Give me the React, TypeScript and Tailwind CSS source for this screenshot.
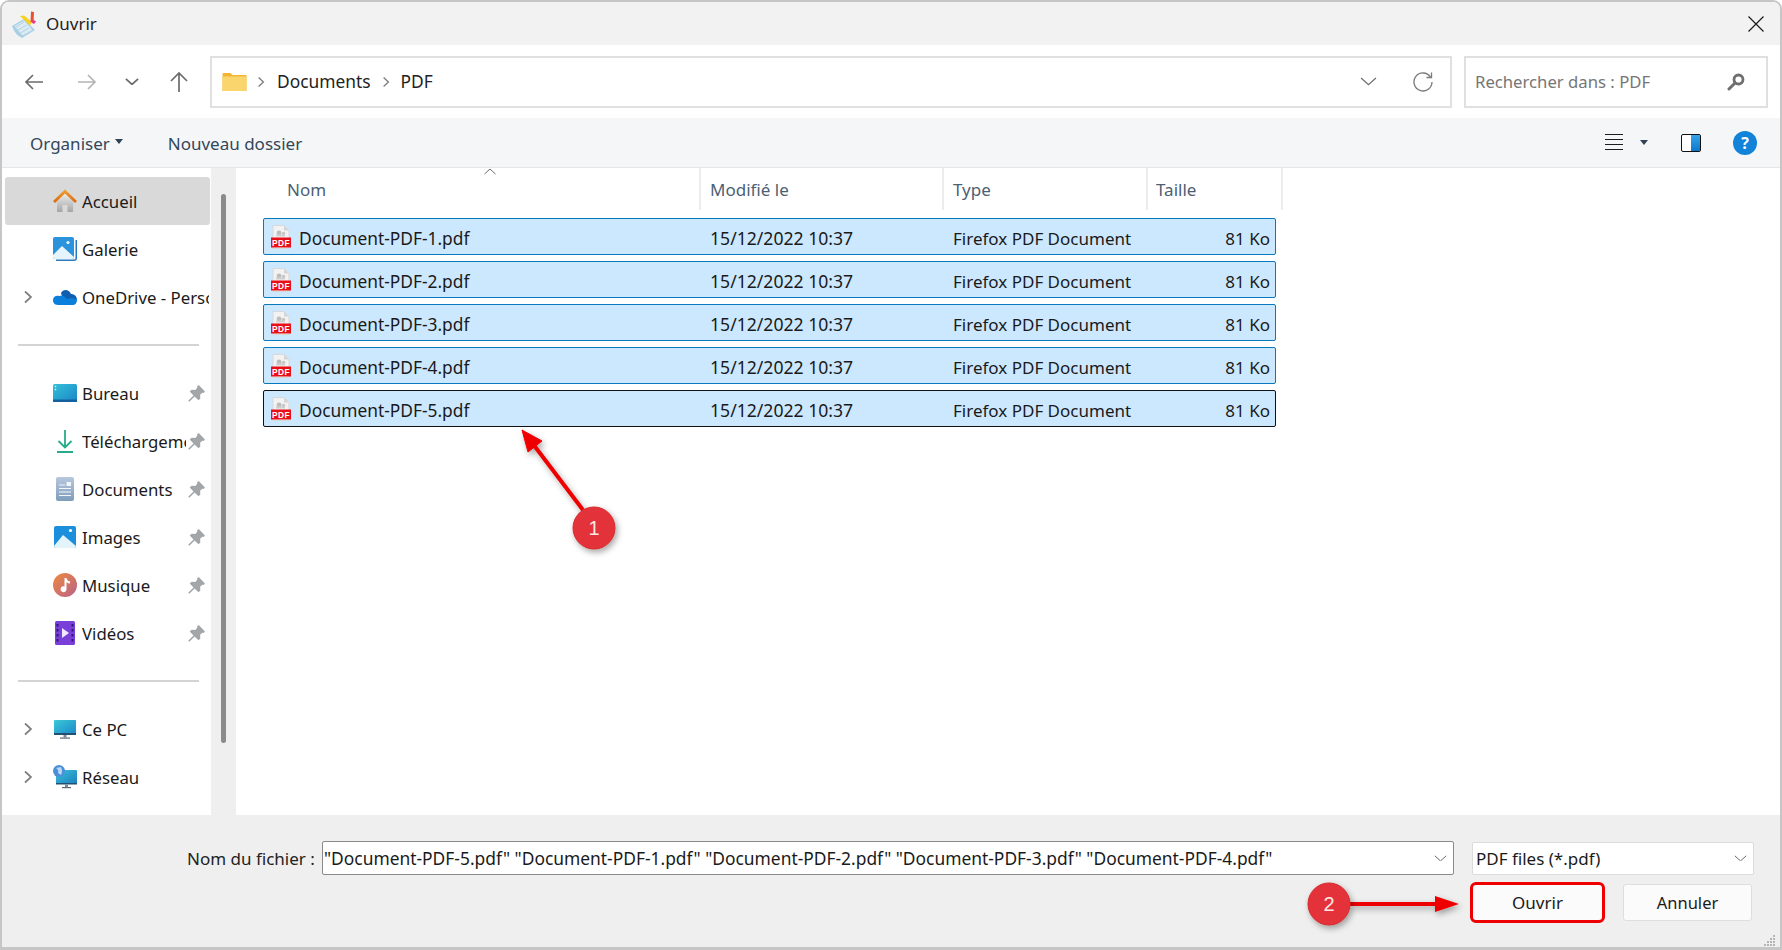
import React from "react";

const Chevron = ({ className = "" }: { className?: string }) => (
  <svg width="10" height="14" viewBox="0 0 10 14" className={className} fill="none" stroke="#7f7f7f" strokeWidth="1.7">
    <path d="M2 1.5 L8 7 L2 12.5" />
  </svg>
);

const Down = ({ w = 16, color = "#6b6b6b", sw = 1.2 }: { w?: number; color?: string; sw?: number }) => (
  <svg width={w} height={w / 2} viewBox="0 0 16 8" fill="none" stroke={color} strokeWidth={sw}>
    <path d="M1 1 L8 7.3 L15 1" />
  </svg>
);

const Caret = ({ color = "#2f4256" }: { color?: string }) => (
  <svg width="8" height="5" viewBox="0 0 8 5"><path d="M0 0H8L4 5Z" fill={color} /></svg>
);

const Pin = () => (
  <svg width="17" height="17" viewBox="0 0 16 16" fill="#a3a6a9">
    <path d="M10 0 L16 6 L14.6 7.6 L13.4 7.2 L11.4 9.2 L11.6 12.6 L9.8 14.4 L6.2 10.8 L1.2 15.8 L0.2 14.8 L5.2 9.8 L1.6 6.2 L3.4 4.4 L6.8 4.6 L8.8 2.6 L8.4 1.4 Z" />
  </svg>
);

const Home = () => (
  <svg width="24" height="24" viewBox="0 0 24 24">
    <defs>
      <linearGradient id="hg" x1="0" y1="0" x2="0" y2="1"><stop offset="0" stopColor="#ececec" /><stop offset="1" stopColor="#a5a5a5" /></linearGradient>
      <linearGradient id="hr" x1="0" y1="0" x2="0" y2="1"><stop offset="0" stopColor="#ef9a2c" /><stop offset="1" stopColor="#d96a14" /></linearGradient>
    </defs>
    <path d="M4 12 L12 4.5 L20 12 V23 H14.5 V16 H9.5 V23 H4Z" fill="url(#hg)" />
    <path d="M1 13 L12 2.5 L23 13" fill="none" stroke="url(#hr)" strokeWidth="2.8" />
  </svg>
);

const Gallery = () => (
  <svg width="24" height="24" viewBox="0 0 24 24">
    <path d="M22.5 3 H24 V21 Q24 24 21 24 H3 V22.5 H21 Q22.5 22.5 22.5 21Z" fill="#2a78c0" />
    <rect x="0" y="0" width="21" height="22" rx="2" fill="#2b92dc" />
    <circle cx="15" cy="5.5" r="1.6" fill="#e8f6ff" />
    <path d="M0 18 L9 9 L21 20 V20 Q21 22 19 22 H2 Q0 22 0 20Z" fill="#e6f5fc" />
  </svg>
);

const Cloud = () => (
  <svg width="24" height="16" viewBox="0 0 24 16">
    <path d="M8 4 C10 0 16 0 18 5 C21 5 24 7 24 11 L10 11Z" fill="#0f5fb0" />
    <path d="M5 16 C1 16 0 13 0 11 C0 8 3 6 6 7 C9 6 12 7 14 10 C17 9 21 9 24 11 C24 14 22 16 20 16Z" fill="#0a80dc" />
  </svg>
);

const Desktop = () => (
  <svg width="24" height="18" viewBox="0 0 24 18">
    <defs><linearGradient id="dg" x1="0" y1="0" x2="1" y2="1"><stop offset="0" stopColor="#35c1d8" /><stop offset="1" stopColor="#1a84c8" /></linearGradient></defs>
    <rect width="24" height="18" rx="1.5" fill="url(#dg)" />
    <rect y="15.5" width="24" height="2.5" fill="#14609c" />
    <circle cx="2.5" cy="2.5" r="0.8" fill="#fff" /><circle cx="2.5" cy="5.5" r="0.8" fill="#fff" />
  </svg>
);

const Download = () => (
  <svg width="16" height="24" viewBox="0 0 16 24" fill="none" stroke="#27ab8a" strokeWidth="1.8">
    <path d="M8 1 V18 M1.5 12 L8 18.5 L14.5 12" /><path d="M0 23 H16" />
  </svg>
);

const Docs = () => (
  <svg width="18" height="24" viewBox="0 0 18 24">
    <defs><linearGradient id="dc" x1="0" y1="0" x2="0" y2="1"><stop offset="0" stopColor="#b8c8dc" /><stop offset="1" stopColor="#7f9cbc" /></linearGradient></defs>
    <rect width="18" height="24" rx="2" fill="url(#dc)" />
    <g stroke="#f2f6fb" strokeWidth="1.2"><path d="M3 8H9M3 11.5H15M3 15H15M3 18.5H15" /></g>
    <rect x="10.5" y="5" width="4.5" height="4" fill="#f2f6fb" />
  </svg>
);

const Images = () => (
  <svg width="22" height="22" viewBox="0 0 22 22">
    <rect width="22" height="22" rx="2" fill="#1c8fdc" />
    <circle cx="16.5" cy="4.5" r="1.6" fill="#fff" />
    <path d="M0 20 L9 9 L22 20 V20 Q22 22 20 22 H2 Q0 22 0 20Z" fill="#e3f4fb" />
  </svg>
);

const Music = () => (
  <svg width="24" height="24" viewBox="0 0 24 24">
    <defs><linearGradient id="mg" x1="0" y1="0" x2="1" y2="1"><stop offset="0" stopColor="#ee8a3c" /><stop offset="1" stopColor="#b8628c" /></linearGradient></defs>
    <circle cx="12" cy="12" r="12" fill="url(#mg)" />
    <path d="M11.5 5 H13.5 Q14 8 17 8.5 V10.5 Q15 10.5 13.5 9.2 V16 A3 3 0 1 1 11.5 13.4Z" fill="#fff" />
  </svg>
);

const Video = () => (
  <svg width="20" height="24" viewBox="0 0 20 24">
    <rect width="20" height="24" rx="1.5" fill="#7a3fd8" />
    <g fill="#2d1a78"><rect x="1.5" y="3" width="2" height="2.5" /><rect x="1.5" y="8" width="2" height="2.5" /><rect x="1.5" y="13" width="2" height="2.5" /><rect x="1.5" y="18" width="2" height="2.5" /><rect x="16.5" y="3" width="2" height="2.5" /><rect x="16.5" y="8" width="2" height="2.5" /><rect x="16.5" y="13" width="2" height="2.5" /><rect x="16.5" y="18" width="2" height="2.5" /></g>
    <path d="M7 7 L14 12 L7 17Z" fill="#efe8ff" />
  </svg>
);

const Pc = () => (
  <svg width="22" height="19" viewBox="0 0 22 19">
    <defs><linearGradient id="pg" x1="0" y1="0" x2="1" y2="1"><stop offset="0" stopColor="#3cc8d8" /><stop offset="1" stopColor="#1a88c8" /></linearGradient></defs>
    <rect width="22" height="14.5" rx="1" fill="url(#pg)" />
    <rect y="13" width="22" height="2" fill="#22506e" />
    <rect x="9.5" y="15" width="3" height="2.5" fill="#7b8a96" /><rect x="6" y="17.5" width="10" height="1.2" fill="#5a6a76" />
  </svg>
);

const Net = () => (
  <svg width="24" height="24" viewBox="0 0 24 24">
    <defs><linearGradient id="ng" x1="0" y1="0" x2="1" y2="1"><stop offset="0" stopColor="#3cc0d8" /><stop offset="1" stopColor="#1a80c0" /></linearGradient></defs>
    <rect x="3" y="5" width="21" height="14" rx="1" fill="url(#ng)" />
    <rect x="3" y="18" width="21" height="1.5" fill="#22506e" />
    <rect x="12" y="19.5" width="3" height="2.5" fill="#7b8a96" /><rect x="9" y="22" width="9" height="1.2" fill="#5a6a76" />
    <circle cx="6" cy="6" r="6" fill="#4a8fd8" /><path d="M3 3 Q6 5 5 8 L8 10 Q10 6 8 2Z" fill="#b8d8f4" />
  </svg>
);

const PdfIcon = () => (
  <svg width="20" height="24" viewBox="0 0 20 24">
    <path d="M2 0.5 H13 L18 5.5 V23.5 H2Z" fill="#f2f2f2" stroke="#d8d8d8" />
    <path d="M13 0.5 V5.5 H18Z" fill="#d4d4d4" />
    <circle cx="8" cy="8" r="2.4" fill="#bdbdbd" /><circle cx="12.5" cy="8.5" r="1.8" fill="#c6c6c6" /><rect x="5" y="9.5" width="9" height="2" fill="#cfcfcf" />
    <rect x="0" y="12.5" width="20" height="10" fill="#e80f18" />
    <text x="10" y="20.6" textAnchor="middle" fontSize="8.4" fontWeight="700" letterSpacing="0.4" fill="#fff" fontFamily="Liberation Sans, sans-serif">PDF</text>
  </svg>
);

const AppIcon = () => (
  <svg width="24" height="28" viewBox="0 0 24 28">
    <path d="M0 15 L12 8 L23 19 L10 27 Q3 24 0 15Z" fill="#a9cfe6" />
    <path d="M2.5 15 L12 9.5 L20.5 19 L10.5 24.5Z" fill="#dbeaf3" />
    <path d="M3.5 16 L12 11 M6 19 L14.5 14 M8.5 22 L17 17" stroke="#b4d3e6" strokeWidth="1" />
    <path d="M8 5 L12 4.5 L20 11 L18 14.5 Z" fill="#f6d21e" />
    <path d="M19 0.5 L22 1 L21.5 11 L18.5 11Z" fill="#ec4f2a" />
    <path d="M21 8.5 L24 10.5 L22 13 L19.5 11.5Z" fill="#e83c8c" />
  </svg>
);

const side = [
  { t: "Accueil", i: <Home />, sel: true },
  { t: "Galerie", i: <Gallery /> },
  { t: "OneDrive - Personnel", i: <Cloud />, ch: true },
  { sep: true },
  { t: "Bureau", i: <Desktop />, pin: true },
  { t: "Téléchargements", i: <Download />, pin: true },
  { t: "Documents", i: <Docs />, pin: true },
  { t: "Images", i: <Images />, pin: true },
  { t: "Musique", i: <Music />, pin: true },
  { t: "Vidéos", i: <Video />, pin: true },
  { sep: true },
  { t: "Ce PC", i: <Pc />, ch: true },
  { t: "Réseau", i: <Net />, ch: true },
];

const SideRow = ({ r }: { r: any }) => (
  <div className={`h-[48px] w-[205px] flex items-center rounded-[3px] overflow-hidden ${r.sel ? "bg-[#d9d9d9]" : ""}`}>
    <div className="w-[46px] shrink-0 pl-[18px]">{r.ch && <Chevron />}</div>
    <div className="w-[29px] shrink-0 flex justify-center items-center -ml-[1px] mr-[3px]">{r.i}</div>
    <div className={`whitespace-nowrap overflow-hidden leading-[28px] pt-[1px] text-[16.8px] ${r.pin ? "w-[104px]" : "w-[127px]"} shrink-0`}>{r.t}</div>
    {r.pin && <div className="ml-[2px] shrink-0"><Pin /></div>}
  </div>
);

const files = [1, 2, 3, 4, 5];

export default function App() {
  return (
    <div className="w-[1782px] h-[950px] bg-white overflow-hidden text-[17.35px] leading-none text-[#1a1a1a] relative" style={{ fontFamily: '"Noto Sans", sans-serif' }}>
      <div className="w-full h-full flex flex-col border-x-2 border-t-2 border-b-[3px] border-[#c6c6c6] rounded-t-[9px] overflow-hidden bg-white">
        {/* title */}
        <div className="h-[43px] bg-[#f2f2f2] flex items-center shrink-0">
          <div className="ml-[10px] w-[24px] h-[28px] mt-[2px]"><AppIcon /></div>
          <div className="ml-[10px] text-[#222] text-[17px]">Ouvrir</div>
          <svg className="ml-auto mr-[16px]" width="16" height="16" viewBox="0 0 16 16" fill="none" stroke="#1a1a1a" strokeWidth="1.2"><path d="M0.5 0.5 L15.5 15.5 M15.5 0.5 L0.5 15.5" /></svg>
        </div>
        {/* address */}
        <div className="h-[73px] bg-white flex items-center shrink-0">
          <div className="w-[208px] shrink-0 flex items-center pl-[22px]">
            <svg width="20" height="18" viewBox="0 0 20 18" fill="none" stroke="#6b6b6b" strokeWidth="1.7"><path d="M19 9H2 M9 2 L2 9 L9 16" /></svg>
            <svg className="ml-[33px]" width="20" height="18" viewBox="0 0 20 18" fill="none" stroke="#b5b5b5" strokeWidth="1.7"><path d="M1 9H18 M11 2 L18 9 L11 16" /></svg>
            <div className="ml-[28px]"><Down w={14} color="#6b6b6b" sw={2} /></div>
            <svg className="ml-[30px]" width="20" height="22" viewBox="0 0 20 22" fill="none" stroke="#6b6b6b" strokeWidth="1.7"><path d="M10 21V2 M2 10 L10 2 L18 10" /></svg>
          </div>
          <div className="w-[1242px] h-[52px] border-2 border-[#e0e0e0] flex items-center shrink-0">
            <svg className="ml-[10px]" width="25" height="18" viewBox="0 0 24 18">
              <path d="M0 1 Q0 0 1 0 H8 L10 2 H24 V18 H0Z" fill="#f2b632" />
              <path d="M0 3.5 H24 V17 Q24 18 23 18 H1 Q0 18 0 17Z" fill="#fad56e" />
            </svg>
            <div className="ml-[10px]"><Chevron className="w-[8px]" /></div>
            <div className="ml-[12px] text-[#222]">Documents</div>
            <div className="ml-[12px]"><Chevron className="w-[8px]" /></div>
            <div className="ml-[10px] text-[#222]">PDF</div>
            <div className="ml-auto mr-[36px]"><Down w={17} color="#6f6f6f" /></div>
            <svg className="mr-[17px]" width="20" height="20" viewBox="0 0 20 20" fill="none" stroke="#7a7a7a" strokeWidth="1.3">
              <path d="M17.5 5 A9 9 0 1 0 19 10" /><path d="M18.5 0.5 V5.5 H13.5" />
            </svg>
          </div>
          <div className="w-[304px] h-[52px] ml-[12px] border-2 border-[#e0e0e0] flex items-center shrink-0">
            <div className="ml-[9px] text-[#767676] text-[16.7px] pt-[2px]">Rechercher dans : PDF</div>
            <svg className="ml-auto mr-[21px]" width="18" height="18" viewBox="0 0 18 18" fill="none"><circle cx="11.5" cy="6.5" r="4.5" stroke="#6f6f6f" strokeWidth="2.8" /><path d="M8 10 L2 16" stroke="#6f6f6f" strokeWidth="3" strokeLinecap="round" /></svg>
          </div>
        </div>
        {/* command */}
        <div className="h-[50px] bg-[#f5f6f7] border-b border-[#e6e6e6] flex items-center shrink-0 text-[#33475b] text-[17px]">
          <div className="ml-[28px] pt-[2px]">Organiser</div>
          <div className="ml-[5px] -mt-[2px]"><Caret /></div>
          <div className="ml-[45px] pt-[2px]">Nouveau dossier</div>
          <svg className="ml-auto" width="18" height="17" viewBox="0 0 18 17" stroke="#1d1d1d" strokeWidth="1"><path d="M0 0.5H18M0 5.5H18M0 10.5H18M0 15.5H18" /></svg>
          <div className="ml-[17px]"><Caret /></div>
          <svg className="ml-[33px]" width="20" height="18" viewBox="0 0 20 18">
            <defs><linearGradient id="pa" x1="0" y1="0" x2="0" y2="1"><stop offset="0" stopColor="#35a5ea" /><stop offset="1" stopColor="#0d78cc" /></linearGradient></defs>
            <rect x="0.5" y="0.5" width="19" height="17" rx="1.5" fill="#fff" stroke="#111" />
            <rect x="10" y="1" width="9" height="16" fill="url(#pa)" />
          </svg>
          <div className="ml-[32px] mr-[23px] w-[24px] h-[24px] rounded-full bg-[#1183d8] text-white flex items-center justify-center text-[16px] font-bold">?</div>
        </div>
        {/* main */}
        <div className="flex-1 min-h-0 flex bg-white">
          <div className="w-[209px] shrink-0 pl-[3px] pt-[9px]">
            {side.map((r: any, i) =>
              r.sep ? (
                <div key={i} className="h-[48px] pl-[13px] flex items-center"><div className="w-[181px] h-[2px] bg-[#d4d4d4]" /></div>
              ) : (
                <SideRow key={i} r={r} />
              )
            )}
          </div>
          <div className="w-[25px] shrink-0 bg-[#efefef] pl-[10px] pt-[26px]">
            <div className="w-[5px] h-[549px] rounded-full bg-[#8b8b8b]" />
          </div>
          <div className="flex-1 pl-[27px] text-[17px]">
            <div className="h-[42px] flex text-[#4d5f74] items-center">
              <div className="w-[438px] h-full border-r-2 border-[#ececec] pl-[24px] flex items-center relative">
                Nom
                <svg className="absolute left-[221px] top-[0px]" width="12" height="7" viewBox="0 0 12 7" fill="none" stroke="#6b6b6b"><path d="M0.5 6 L6 1 L11.5 6" /></svg>
              </div>
              <div className="w-[243px] h-full border-r-2 border-[#ececec] pl-[9px] flex items-center">Modifié le</div>
              <div className="w-[204px] h-full border-r-2 border-[#ececec] pl-[9px] flex items-center">Type</div>
              <div className="w-[135px] h-full border-r-2 border-[#ececec] pl-[8px] flex items-center">Taille</div>
            </div>
            <div className="pt-[8px] flex flex-col gap-[6px] w-[1013px]">
              {files.map((n) => (
                <div key={n} className={`h-[37px] flex items-center bg-[#cce8ff] border-[1.5px] rounded-[2px] ${n === 5 ? "border-[#111]" : "border-[#0a78bd]"}`}>
                  <div className="ml-[7px] w-[20px] h-[24px] shrink-0"><PdfIcon /></div>
                  <div className="ml-[8px] w-[411px] shrink-0 pt-[4px] text-[17.35px]">Document-PDF-{n}.pdf</div>
                  <div className="w-[243px] shrink-0 pt-[4px] text-[17.6px]">15/12/2022 10:37</div>
                  <div className="w-[230px] shrink-0 pt-[3px] whitespace-nowrap">Firefox PDF Document</div>
                  <div className="flex-1 text-right pr-[5px] pt-[3px] whitespace-nowrap">81 Ko</div>
                </div>
              ))}
            </div>
          </div>
        </div>
        {/* bottom */}
        <div className="h-[132px] bg-[#efefef] shrink-0 relative">
          <div className="flex items-center pt-[26px]">
            <div className="ml-[185px] w-[135px] whitespace-nowrap text-[#222] text-[17px]">Nom du fichier :</div>
            <div className="w-[1132px] h-[34px] bg-white border-[1.5px] border-[#8a8a8a] rounded-[2px] flex items-center pl-[1px] whitespace-nowrap overflow-hidden shrink-0 text-[17.4px] leading-[28px]">
              "Document-PDF-5.pdf" "Document-PDF-1.pdf" "Document-PDF-2.pdf" "Document-PDF-3.pdf" "Document-PDF-4.pdf"
              <div className="ml-auto mr-[6px] shrink-0"><Down w={13} color="#666" /></div>
            </div>
            <div className="ml-[18px] w-[282px] h-[33px] bg-white border border-[#dcdcdc] rounded-[2px] flex items-center pl-[3px] shrink-0 text-[17px]">
              PDF files (*.pdf)
              <div className="ml-auto mr-[6px]"><Down w={13} color="#666" /></div>
            </div>
          </div>
          <div className="flex pt-[7px] items-start">
            <div className="ml-[1468px] w-[135px] h-[41px] border-[3.5px] border-[#ee0000] rounded-[6px] bg-[#fbfbfb] flex items-center justify-center shrink-0 text-[17px]">Ouvrir</div>
            <div className="ml-[18px] mt-[2px] w-[129px] h-[37px] border border-[#dedede] rounded-[3px] bg-[#fbfbfb] flex items-center justify-center shrink-0 text-[16.5px] pt-[2px]">Annuler</div>
          </div>
          <svg className="absolute right-[3px] bottom-[0px]" width="13" height="13" viewBox="0 0 13 13" fill="#b5b5b5">
            <rect x="9" y="1" width="2" height="2" /><rect x="6" y="4" width="2" height="2" /><rect x="9" y="4" width="2" height="2" /><rect x="3" y="7" width="2" height="2" /><rect x="6" y="7" width="2" height="2" /><rect x="9" y="7" width="2" height="2" /><rect x="0" y="10" width="2" height="2" /><rect x="3" y="10" width="2" height="2" /><rect x="6" y="10" width="2" height="2" /><rect x="9" y="10" width="2" height="2" />
          </svg>
        </div>
      </div>

      {/* annotations */}
      <svg className="absolute left-0 top-0 pointer-events-none" width="1782" height="950" viewBox="0 0 1782 950">
        <defs>
          <filter id="sh" x="-30%" y="-30%" width="160%" height="160%"><feDropShadow dx="2" dy="3" stdDeviation="3" floodColor="#000" floodOpacity="0.35" /></filter>
        </defs>
        <g filter="url(#sh)">
          <path d="M583 510 L533 444" stroke="#ef0000" strokeWidth="4" fill="none" />
          <path d="M522 430 L542 441 L528 452Z" fill="#ef0000" stroke="#ef0000" strokeWidth="1" />
          <path d="M1350 904 H1440" stroke="#ef0000" strokeWidth="4" fill="none" />
          <path d="M1435 896 L1459 904 L1435 912Z" fill="#ef0000" />
        </g>
        <g filter="url(#sh)">
          <circle cx="594" cy="528" r="21" fill="#e4323a" stroke="#d42a2a" />
          <circle cx="1329" cy="904" r="21" fill="#e4323a" stroke="#d42a2a" />
        </g>
      </svg>
      <div className="absolute left-[573px] top-[507px] w-[42px] h-[42px] flex items-center justify-center text-[#fde8e8] text-[20px]" style={{ fontFamily: '"Liberation Sans", sans-serif' }}>1</div>
      <div className="absolute left-[1308px] top-[883px] w-[42px] h-[42px] flex items-center justify-center text-[#fde8e8] text-[20px]" style={{ fontFamily: '"Liberation Sans", sans-serif' }}>2</div>
    </div>
  );
}
